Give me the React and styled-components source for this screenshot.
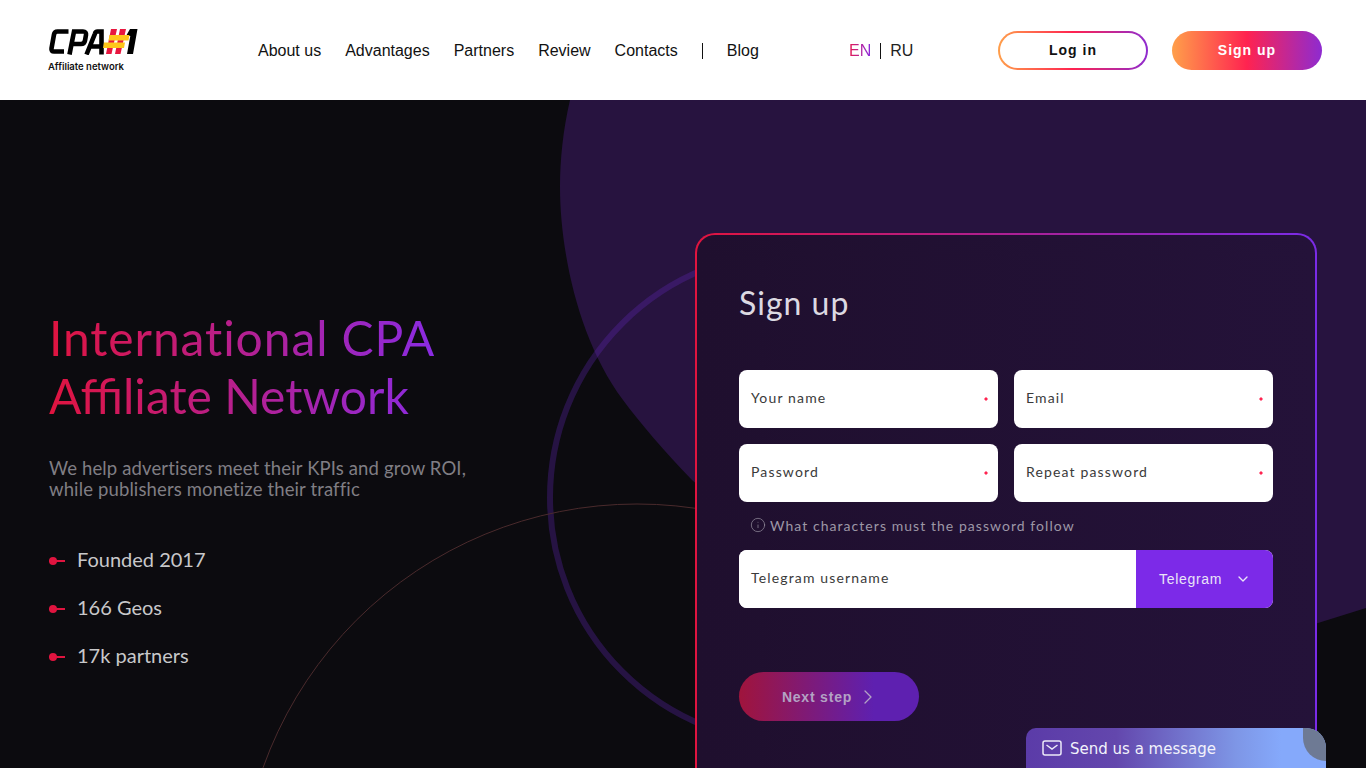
import styled, { createGlobalStyle } from 'styled-components';
import { ChevronDown, ChevronRight, Info } from 'lucide-react';

const Global = createGlobalStyle`
  html, body { margin: 0; padding: 0; height: 768px; overflow: hidden; background: #0c0b0f; }
  * { box-sizing: border-box; }
`;

const Page = styled.div`
  width: 1366px;
  height: 768px;
  overflow: hidden;
  position: relative;
  font-family: 'Liberation Sans', Arial, sans-serif;
`;

// ── Header ────────────────────────────────────────────────
const Header = styled.header`
  height: 100px;
  background: #fff;
  display: flex;
  align-items: center;
  padding: 0 44px 0 48px;
`;

const LogoBox = styled.div`
  width: 210px;
  display: flex;
  flex-direction: column;
  margin-top: 1px;
`;

const LogoCaption = styled.span`
  font-family: Inter, sans-serif;
  font-size: 9.5px;
  font-weight: 600;
  color: #111;
  margin-top: 6px;
`;

const Nav = styled.nav`
  display: flex;
  align-items: center;
  gap: 24px;
  width: 591px;
  padding-top: 2px;
`;

const NavItem = styled.a`
  font-size: 16px;
  color: #111;
`;

const NavDivider = styled.span`
  width: 1px;
  height: 16px;
  background: #111;
`;

const Lang = styled.div`
  display: flex;
  align-items: center;
  font-size: 16px;
  color: #222;
  width: 149px;
  padding-top: 2px;
`;

const LangActive = styled.span`
  background: linear-gradient(90deg, #e5194f, #8a2be2);
  -webkit-background-clip: text;
  background-clip: text;
  color: transparent;
`;

const LangDivider = styled.span`
  width: 1px;
  height: 16px;
  background: #111;
  margin: 0 9px;
`;

const LoginButton = styled.button`
  width: 150px;
  height: 39px;
  border-radius: 20px;
  border: 2px solid transparent;
  background: linear-gradient(#fff, #fff) padding-box,
    linear-gradient(90deg, #ff9f4a 0%, #ff2350 50%, #8e2bd0 100%) border-box;
  font: bold 14px 'Liberation Sans', sans-serif;
  letter-spacing: 1px;
  color: #111;
`;

const SignupButton = styled.button`
  width: 150px;
  height: 39px;
  margin-left: 24px;
  border-radius: 20px;
  border: 0;
  background: linear-gradient(90deg, #ff9f4a 0%, #ff2350 50%, #8e2bd0 100%);
  font: bold 14px 'Liberation Sans', sans-serif;
  letter-spacing: 1px;
  color: #fff;
`;

// ── Hero ──────────────────────────────────────────────────
const Hero = styled.section`
  position: relative;
  height: 668px;
  display: flex;
  padding-left: 49px;
  overflow: hidden;
`;

const Backdrop = styled.svg`
  position: absolute;
  left: 0;
  top: 0;
`;

const Intro = styled.div`
  position: relative;
  width: 646px;
  padding-top: 209px;
  font-family: Lato, sans-serif;
`;

const Title = styled.h1`
  margin: 0;
  width: fit-content;
  font-size: 48px;
  font-weight: 400;
  line-height: 58px;
  background: linear-gradient(90deg, #e0143f 0%, #8a2be2 100%);
  -webkit-background-clip: text;
  background-clip: text;
  color: transparent;
`;

const TitleLine = styled.span`
  display: block;
  font-variant-ligatures: ${({ $open }) => ($open ? 'none' : 'normal')};
  letter-spacing: ${({ $open }) => ($open ? '0.9px' : '0')};
`;

const Lead = styled.p`
  margin: 33px 0 0;
  font-size: 18.5px;
  line-height: 21px;
  letter-spacing: 0.13px;
  color: #807e84;
`;

const Facts = styled.ul`
  list-style: none;
  margin: 47px 0 0;
  padding: 0;
  display: flex;
  flex-direction: column;
  gap: 24px;
`;

const Fact = styled.li`
  display: flex;
  align-items: center;
  gap: 12px;
  height: 24px;
  font-size: 20px;
  color: #c8c8ca;
`;

const Bullet = styled.span`
  position: relative;
  width: 16px;
  height: 2px;
  margin-top: 4px;
  background: #e0143f;

  &::before {
    content: '';
    position: absolute;
    left: 0;
    top: -3px;
    width: 8px;
    height: 8px;
    border-radius: 50%;
    background: #e0143f;
  }
`;

// ── Form card ─────────────────────────────────────────────
const Card = styled.form`
  position: relative;
  width: 622px;
  height: 600px;
  margin-top: 133px;
  padding: 48px 42px;
  border-radius: 20px;
  border: 2px solid transparent;
  background: linear-gradient(90deg, #1f0f2e, #241239) padding-box,
    linear-gradient(90deg, #e0143f 0%, #7a2be8 100%) border-box;
  font-family: Lato, sans-serif;
`;

const CardTitle = styled.h2`
  margin: 0 0 47px;
  height: 40px;
  font-size: 32px;
  line-height: 40px;
  font-weight: 400;
  letter-spacing: 1px;
  color: #dcd9e2;
`;

const Grid = styled.div`
  display: grid;
  grid-template-columns: 259px 259px;
  gap: 16px;
`;

const Field = styled.div`
  position: relative;
  height: 58px;
  background: #fff;
  border-radius: 8px;
  display: flex;
  align-items: center;
  padding: 0 12px 3px;
  font-size: 14px;
  letter-spacing: 1.15px;
  color: #3a3a3a;

  &::after {
    content: '';
    display: ${({ $plain }) => ($plain ? 'none' : 'block')};
    position: absolute;
    right: 10px;
    top: 27px;
    width: 4px;
    height: 4px;
    background: #ff2350;
    clip-path: polygon(50% 0, 100% 50%, 50% 100%, 0 50%);
  }
`;

const Hint = styled.div`
  display: flex;
  align-items: center;
  gap: 4px;
  height: 48px;
  padding: 0 0 2px 11px;
  font-size: 14px;
  letter-spacing: 1.05px;
  color: #9d97a6;
`;

const TelegramRow = styled.div`
  display: flex;
  height: 58px;
  border-radius: 8px;
  overflow: hidden;
  background: #fff;
`;

const TelegramInput = styled(Field)`
  flex: 1;
  border-radius: 0;
`;

const Messenger = styled.div`
  width: 137px;
  background: #7c2ae8;
  color: #e9e4f7;
  display: flex;
  align-items: center;
  justify-content: space-between;
  padding: 0 22px 0 23px;
  font: 14px 'Liberation Sans', sans-serif;
  letter-spacing: 0.7px;
`;

const NextButton = styled.button`
  display: flex;
  align-items: center;
  justify-content: center;
  gap: 4px;
  width: 180px;
  height: 49px;
  margin-top: 64px;
  padding: 0 0 0 4px;
  border: 0;
  border-radius: 25px;
  background: linear-gradient(90deg, #a0143c 0%, #5e20b0 75%);
  color: #b3a3c4;
  font: bold 14px 'Liberation Sans', sans-serif;
  letter-spacing: 0.8px;
`;

// ── Chat tab ──────────────────────────────────────────────
const ChatTab = styled.div`
  position: absolute;
  right: 40px;
  bottom: 0;
  width: 300px;
  height: 40px;
  display: flex;
  align-items: center;
  gap: 8px;
  padding: 0 0 0 16px;
  border-radius: 10px 20px 0 0;
  overflow: hidden;
  background: linear-gradient(90deg, #5b3ba8 0%, #6347ad 30%, #7e96e6 70%, #85a9fb 85%);
  font: 15px 'DejaVu Sans', sans-serif;
  color: #f2f2fb;

  &::after {
    content: '';
    position: absolute;
    right: 0;
    top: 0;
    width: 23px;
    height: 33px;
    background: #6e7a94;
    border-bottom-left-radius: 24px;
  }
`;

const ChatText = styled.span`
  padding-top: 2px;
`;

const Logo = () => (
  <svg width="90" height="26" viewBox="0 0 90 26">
    <g fill="none" stroke="#000" strokeWidth="4.600">
      <path d="M20.500 2.500H9.500Q6.500 2.500 6 5.500L3.500 19.500Q3 22.500 6 22.500H16" />
      <path d="M21.500 25.500L26 2.500H35Q38.500 2.500 38 6L37 11.500Q36.400 15 33 15H25" />
      <path d="M38.500 25.500L47 4.500Q47.500 2.500 49.500 2.500H53.500V25.500M43 17.500H53" />
    </g>
    <path d="M63 0h6l-5.500 25H58zM72 0h6l-5.500 25H67z" fill="#e8173f" />
    <path d="M82 0h7.500l-4.500 25h-6l3.300-18H78z" fill="#000" />
    <path d="M61.500 6h20l-1 5.500H60.500zM56 13.500h21l-1 5.500H55z" fill="#ffc61a" />
  </svg>
);

const Mail = () => (
  <svg width="20" height="16" viewBox="0 0 20 16" fill="none" stroke="#eceaf8" strokeWidth="1.500">
    <rect x="1" y="1" width="18" height="14" rx="2" />
    <path d="M4.500 5L10 9l5.500-4" />
  </svg>
);

const Fields = ['Your name', 'Email', 'Password', 'Repeat password'];
const FactList = ['Founded 2017', '166 Geos', '17k partners'];

export default function App() {
  return (
    <Page>
      <Global />
      <Header>
        <LogoBox>
          <Logo />
          <LogoCaption>Affiliate network</LogoCaption>
        </LogoBox>
        <Nav>
          <NavItem>About us</NavItem>
          <NavItem>Advantages</NavItem>
          <NavItem>Partners</NavItem>
          <NavItem>Review</NavItem>
          <NavItem>Contacts</NavItem>
          <NavDivider />
          <NavItem>Blog</NavItem>
        </Nav>
        <Lang>
          <LangActive>EN</LangActive>
          <LangDivider />
          RU
        </Lang>
        <LoginButton type="button">Log in</LoginButton>
        <SignupButton type="button">Sign up</SignupButton>
      </Header>
      <Hero>
        <Backdrop width="1366" height="668" viewBox="0 0 1366 668">
          <path d="M570 0C563 30 560 60 560 87C560 150 578 240 623 300C640 323 665 352 692 380C850 520 1100 590 1318 523L1366 508V0Z" fill="#27133f" />
          <circle cx="796" cy="397.500" r="246" fill="none" stroke="rgba(100,40,190,0.3)" strokeWidth="6" />
          <circle cx="637" cy="801" r="397" fill="none" stroke="#4a2a2c" strokeWidth="1" />
        </Backdrop>
        <Intro>
          <Title>
            <TitleLine $open>International CPA</TitleLine>
            <TitleLine>Affiliate Network</TitleLine>
          </Title>
          <Lead>We help advertisers meet their KPIs and grow ROI,<br />while publishers monetize their traffic</Lead>
          <Facts>
            {FactList.map((f) => (
              <Fact key={f}><Bullet />{f}</Fact>
            ))}
          </Facts>
        </Intro>
        <Card>
          <CardTitle>Sign up</CardTitle>
          <Grid>
            {Fields.map((f) => <Field key={f}>{f}</Field>)}
          </Grid>
          <Hint><Info size={16} strokeWidth={1} />What characters must the password follow</Hint>
          <TelegramRow>
            <TelegramInput $plain>Telegram username</TelegramInput>
            <Messenger>Telegram <ChevronDown size={16} strokeWidth={2} /></Messenger>
          </TelegramRow>
          <NextButton type="button">Next step <ChevronRight size={24} strokeWidth={1.3} /></NextButton>
        </Card>
        <ChatTab><Mail /><ChatText>Send us a message</ChatText></ChatTab>
      </Hero>
    </Page>
  );
}
